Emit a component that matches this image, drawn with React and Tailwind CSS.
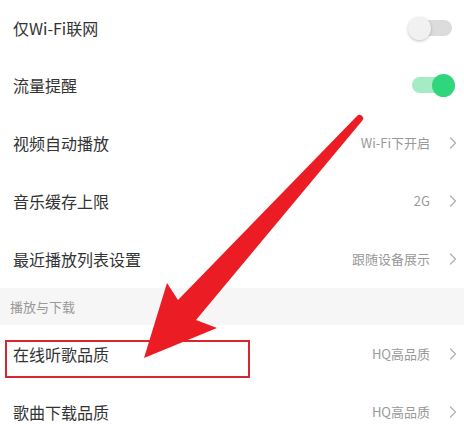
import React from "react";

const font = { fontFamily: '"Noto Sans CJK SC", "Noto Sans", sans-serif' };

function Chevron() {
  return (
    <svg width="8" height="12" viewBox="0 0 8 12" className="ml-[19px] shrink-0">
      <path d="M1.5 1 L6.5 6 L1.5 11" fill="none" stroke="#b0b0b0" strokeWidth="1.3" strokeLinecap="round" strokeLinejoin="round" />
    </svg>
  );
}

function Toggle({ on }) {
  return (
    <div className="relative w-[47px] h-[24px] mr-[2px] flex items-center">
      <div className={`absolute left-[4px] w-[40px] h-[16px] rounded-full ${on ? "bg-[#a3ecc4]" : "bg-[#dcdcdc]"}`} />
      <div
        className={`absolute w-[23px] h-[23px] rounded-full ${on ? "left-[24px] bg-[#2fd67c]" : "left-0 bg-[#f1f1f1] shadow-[0_1px_3px_rgba(0,0,0,0.25)]"}`}
      />
    </div>
  );
}

function Row({ label, value, toggle, h = "h-[58px]" }) {
  return (
    <div className={`flex items-center ${h} pl-[13px] pr-[7px]`}>
      <div className="flex-1 text-[16px] text-[#333]">{label}</div>
      {toggle !== undefined ? (
        <Toggle on={toggle} />
      ) : (
        <div className="flex items-center">
          <span className="text-[13px] text-[#999]">{value}</span>
          <Chevron />
        </div>
      )}
    </div>
  );
}

export default function App() {
  return (
    <div className="relative w-[464px] h-[435px] bg-white overflow-hidden" style={font}>
      <Row label="仅Wi-Fi联网" toggle={false} h="h-[56px]" />
      <Row label="流量提醒" toggle={true} />
      <Row label="视频自动播放" value="Wi-Fi下开启" />
      <Row label="音乐缓存上限" value="2G" />
      <Row label="最近播放列表设置" value="跟随设备展示" />
      <div className="h-[37px] bg-[#f6f6f6] flex items-center pl-[10px] text-[13px] text-[#999]">播放与下载</div>
      <Row label="在线听歌品质" value="HQ高品质" />
      <Row label="歌曲下载品质" value="HQ高品质" />

      <div className="absolute left-[5px] top-[340px] w-[245px] h-[38px] border-2 border-[#d8262e]" />

      <svg className="absolute left-0 top-0" width="464" height="435" viewBox="0 0 464 435">
        <path
          d="M357 116 Q360 113 363 117 Q364 119 362 121 L196 320 L217 328 L144 358 L167 283 L178 300 Z"
          fill="#ec1c24"
        />
      </svg>
    </div>
  );
}
